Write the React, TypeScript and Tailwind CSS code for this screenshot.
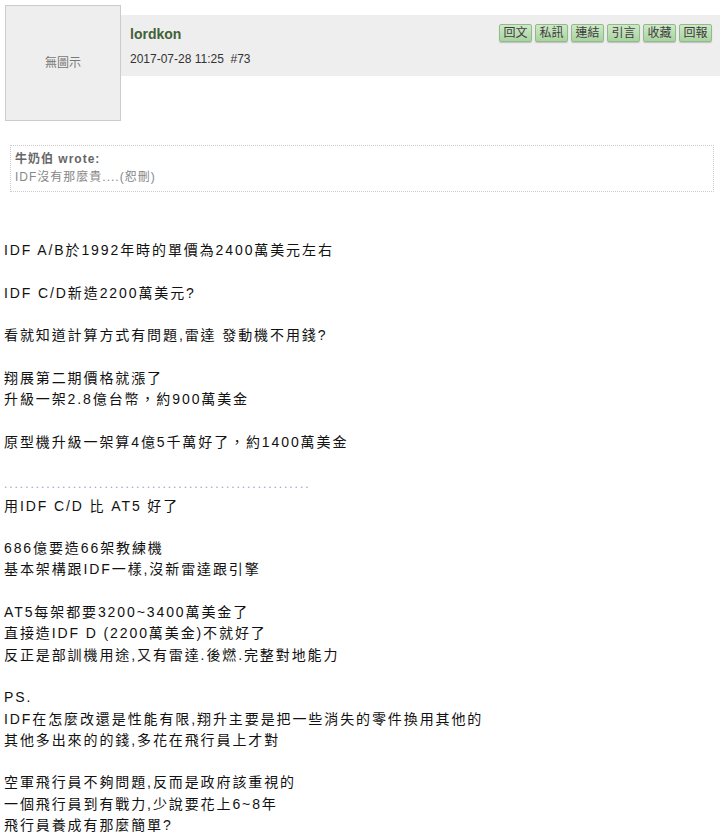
const bodyLines = [
	"IDF A/B於1992年時的單價為2400萬美元左右",
	"",
	"IDF C/D新造2200萬美元?",
	"",
	"看就知道計算方式有問題,雷達 發動機不用錢?",
	"",
	"翔展第二期價格就漲了",
	"升級一架2.8億台幣，約900萬美金",
	"",
	"原型機升級一架算4億5千萬好了，約1400萬美金",
	"",
	"__DOTS__",
	"用IDF C/D 比 AT5 好了",
	"",
	"686億要造66架教練機",
	"基本架構跟IDF一樣,沒新雷達跟引擎",
	"",
	"AT5每架都要3200~3400萬美金了",
	"直接造IDF D (2200萬美金)不就好了",
	"反正是部訓機用途,又有雷達.後燃.完整對地能力",
	"",
	"PS.",
	"IDF在怎麼改還是性能有限,翔升主要是把一些消失的零件換用其他的",
	"其他多出來的的錢,多花在飛行員上才對",
	"",
	"空軍飛行員不夠問題,反而是政府該重視的",
	"一個飛行員到有戰力,少說要花上6~8年",
	"飛行員養成有那麼簡單?",
];

const actions = ["回文", "私訊", "連結", "引言", "收藏", "回報"];

function ActionButton({ text }: { text: string }) {
	return (
		<span className="inline-flex h-[18px] w-[33px] items-center justify-center rounded-[2px] border border-[#8fbc87] bg-gradient-to-b from-[#cfe8c8] to-[#a9d3a1] text-[12px] leading-none text-[#3c3c3c] shadow-[0_1px_1px_rgba(0,0,0,0.2)]">
			{text}
		</span>
	);
}

export default function App() {
	return (
		<div
			className="min-h-[838px] bg-white text-black"
			style={{ fontFamily: '"Liberation Sans", "Noto Sans CJK TC", sans-serif' }}
		>
			<div className="flex pl-[5px] pt-[5px]">
				<div className="flex h-[116px] w-[116px] shrink-0 items-center justify-center border border-[#cccccc] bg-[#eeeeee] text-[12px] text-[#777777]">
					無圖示
				</div>
				<div className="mt-[10px] flex h-[61px] flex-1 justify-between bg-[#eeeeee] pl-[9px] pr-[8px]">
					<div className="flex flex-col">
						<span className="mt-[10px] text-[14px] font-bold leading-[18px] text-[#3f6236]">
							lordkon
						</span>
						<span className="mt-[8px] text-[12px] leading-[16px] text-[#333333] whitespace-pre">
							{"2017-07-28 11:25  #73"}
						</span>
					</div>
					<div className="mt-[9px] flex gap-[3px]">
						{actions.map((a) => (
							<ActionButton key={a} text={a} />
						))}
					</div>
				</div>
			</div>

			<div className="ml-[10px] mr-[6px] mt-[24px] border border-dotted border-[#cccccc] px-[4px] pb-[5px] pt-[5px] text-[12px] leading-[17.5px] tracking-[1px]">
				<div className="font-bold text-[#666666]">牛奶伯 wrote:</div>
				<div className="text-[#888888]">IDF沒有那麼貴....(恕刪)</div>
			</div>

			<div className="mt-[48px] pl-[4px] text-[14px] leading-[21.3px] tracking-[1.9px] text-[#111111]">
				{bodyLines.map((line, i) =>
					line === "__DOTS__" ? (
						<div
							key={i}
							className="h-[21.3px] overflow-hidden text-[12px] tracking-[1.95px] text-[#a0a0c8]"
						>
							{".".repeat(58)}
						</div>
					) : (
						<div key={i} className="h-[21.3px] whitespace-pre">
							{line}
						</div>
					)
				)}
			</div>
		</div>
	);
}
